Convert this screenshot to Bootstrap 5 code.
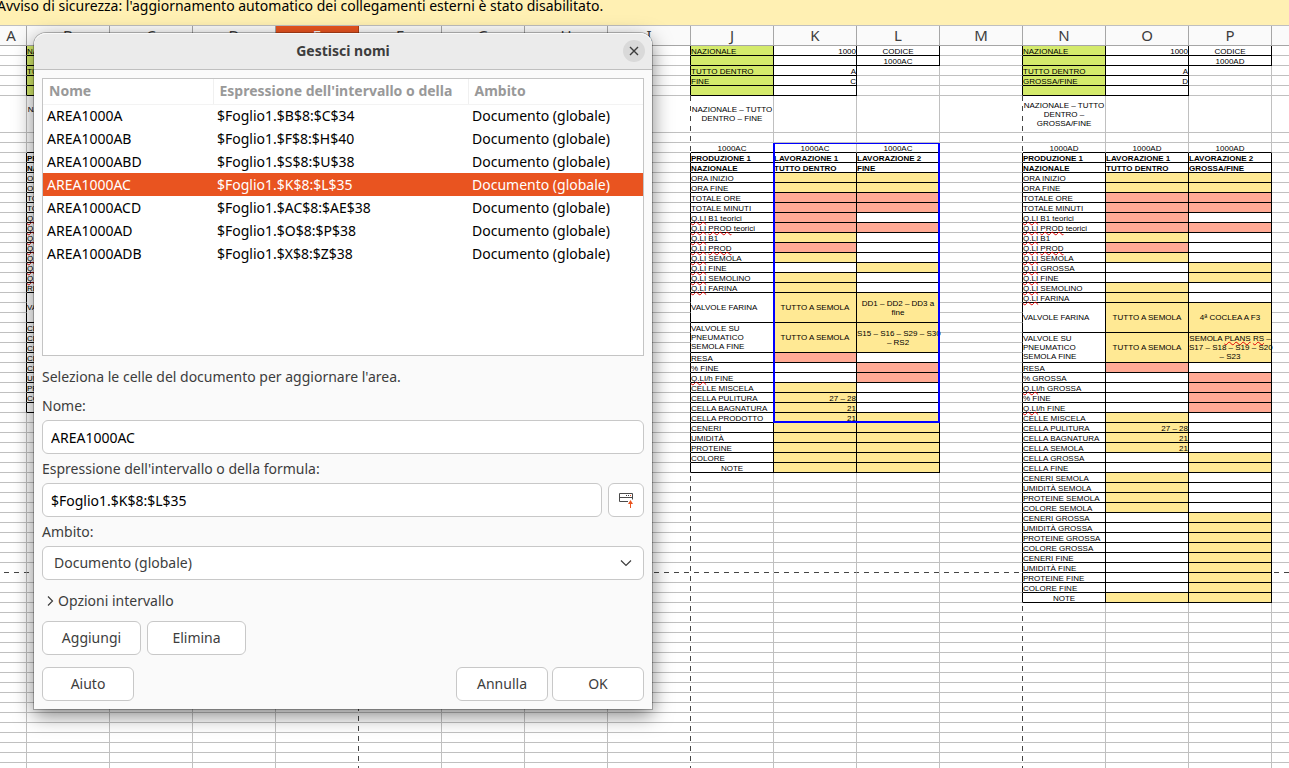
<!DOCTYPE html>
<html lang="it">
<head>
<meta charset="utf-8">
<meta name="viewport" content="width=device-width, initial-scale=1">
<title>Gestisci nomi</title>
<link href="https://cdn.jsdelivr.net/npm/bootstrap@5.3.0/dist/css/bootstrap.min.css" rel="stylesheet">
<style>
  body { font-family: "Noto Sans", "Open Sans", sans-serif; font-size: 14px; line-height: 20px; color: #3d3d3d; background: #fff; }

  .notice-bar { background: #fff0b3; border-bottom: 1px solid #bfbfbf; height: 26px; color: #000; line-height: 12px; font-size: 14px; }
  .notice-bar span { margin-left: -3px; white-space: nowrap; }

  /* Spreadsheet */
  .sheet { table-layout: fixed; border-collapse: separate; border-spacing: 0; width: 1355px; font: 8px/9px "Liberation Sans", sans-serif; color: #000; }
  .sheet col { width: 83px; }
  .sheet col.first-col { width: 27px; }
  .sheet col.page-end { background: linear-gradient(#444 50%, transparent 50%) right 0 / 1px 10px repeat-y; }
  .sheet th { height: 20px; padding: 0; background: #fafafa; border-right: 1px solid #a6a6a6; border-bottom: 1px solid #a6a6a6; font: 15px/19px "Noto Sans", sans-serif; color: #3d3d3d; text-align: center; }
  .sheet th:first-child { padding-right: 4px; }
  .sheet th.current { background: #e95420; border-right-color: #b23c12; color: #fff; }
  .sheet td { height: 10px; padding: 0; border-right: 1px solid #c0c0c0; border-bottom: 1px solid #c0c0c0; vertical-align: bottom; }
  .sheet tr.tall td { height: 37px; vertical-align: middle; }
  .sheet td.page-end { border-right-color: transparent; }
  .sheet tr.page-end { background: linear-gradient(90deg, #444 50%, transparent 50%) 4px bottom / 10px 1px repeat-x; }
  .sheet tr.page-end td { border-bottom-color: transparent; }
  .sheet tr td.line-r { border-right-color: #000; }
  .sheet tr td.line-b { border-bottom-color: #000; }
  .sheet td.one { white-space: nowrap; padding-top: 2px; line-height: 7px; }
  .sheet td.ctr { text-align: center; }
  .sheet td.end { text-align: right; }
  .sheet td.mid { vertical-align: middle; }
  .sheet td.green { background: #d4ea6b; }
  .sheet td.yellow { background: #ffe994; }
  .sheet td.red { background: #ffaa95; }
  .sheet td.strong { font-weight: bold; }
  .sheet .typo { text-decoration: underline wavy #e00000 1px; text-decoration-skip-ink: none; text-underline-offset: 0; }
  .sheet td.range-start { position: relative; }
  .range { position: absolute; left: -1px; top: 0; width: 167px; height: 280px; border: 2px solid #00f; border-top-width: 1px; pointer-events: none; }

  /* Dialog */
  .names-dialog { position: absolute; left: 34px; top: 33px; width: 618px; background: #fafafa; border-radius: 12px 12px 0 0; box-shadow: 0 0 0 1px rgba(0,0,0,.25), 0 6px 20px rgba(0,0,0,.5); }
  .dialog-title { height: 37px; background: #ebebeb; border-bottom: 1px solid #bfbfbf; border-radius: 12px 12px 0 0; box-shadow: inset 0 1px #f9f9f9; }
  .dialog-title h1 { font-size: 14px; line-height: 20px; font-weight: 700; color: #3d3d3d; }
  .close-btn { width: 22px; height: 22px; border: 0; border-radius: 50%; background: #d9d9d9; color: #3d3d3d; right: 7px; top: 7px; }
  .names-list { height: 278px; background: #fff; border: 1px solid #c4c4c4; }
  .names-list table { table-layout: fixed; color: #000; }
  .names-list th { height: 25px; padding: 0 0 0 6px; color: #999; border-right: 1px solid #f0f0f0; border-bottom: 1px solid #f3f3f3; overflow: hidden; white-space: nowrap; }
  .names-list th:last-child { border-right: 0; }
  .names-list td { height: 23px; padding: 0 0 0 4px; line-height: 22px; white-space: nowrap; }
  .names-list tr.chosen td { background: #e95420; color: #fff; }
  .c-name { width: 170px; } .c-expr { width: 255px; }
  .hint { margin-top: 11px; margin-bottom: 9px; }
  .field label { display: block; margin-bottom: 4px; }
  .field { margin-bottom: 5px; }
  .box { height: 34px; border: 1px solid #c8c8c8; border-radius: 6px; background: #fff; padding: 0 8px; font-size: 14px; line-height: 20px; color: #000; }
  select.box { color: #3d3d3d; padding: 0 32px 0 11px; appearance: none; background: #fff url("data:image/svg+xml,%3Csvg xmlns='http://www.w3.org/2000/svg' width='12' height='8'%3E%3Cpath d='M1 1.5l5 5 5-5' fill='none' stroke='%233d3d3d' stroke-width='1.2'/%3E%3C/svg%3E") no-repeat right 11px center; }
  .tight { gap: 6px; }
  .expander { margin-top: 11px; margin-bottom: 10px; border: 0; background: none; padding: 0 4px; color: #3d3d3d; }
  .push { height: 34px; width: 92px; border: 1px solid #c8c8c8; border-radius: 6px; background: #fff; color: #3d3d3d; padding: 0; }
  .push.wide { width: 99px; }
  .push.pick { width: 36px; }
</style>
</head>
<body>
<main class="vh-100 d-flex flex-column overflow-hidden position-relative">
  <div class="notice-bar flex-shrink-0"><span>Avviso di sicurezza: l'aggiornamento automatico dei collegamenti esterni è stato disabilitato.</span></div>

  <div class="flex-fill overflow-hidden">
    <table class="sheet" id="sheet"></table>
  </div>

  <section class="names-dialog" role="dialog" aria-labelledby="dlgTitle">
    <header class="dialog-title d-flex align-items-center justify-content-center position-relative">
      <h1 class="m-0" id="dlgTitle">Gestisci nomi</h1>
      <button type="button" class="close-btn position-absolute p-0 d-flex align-items-center justify-content-center" aria-label="Chiudi">
        <svg width="10" height="10" viewBox="0 0 10 10"><path d="M1 1l8 8M9 1l-8 8" stroke="currentColor" stroke-width="1.4"/></svg>
      </button>
    </header>

    <div class="p-2">
      <div class="names-list overflow-hidden">
        <table class="w-100">
          <colgroup><col class="c-name"><col class="c-expr"><col></colgroup>
          <thead><tr><th>Nome</th><th>Espressione dell'intervallo o della</th><th>Ambito</th></tr></thead>
          <tbody>
            <tr><td>AREA1000A</td><td>$Foglio1.$B$8:$C$34</td><td>Documento (globale)</td></tr>
            <tr><td>AREA1000AB</td><td>$Foglio1.$F$8:$H$40</td><td>Documento (globale)</td></tr>
            <tr><td>AREA1000ABD</td><td>$Foglio1.$S$8:$U$38</td><td>Documento (globale)</td></tr>
            <tr class="chosen"><td>AREA1000AC</td><td>$Foglio1.$K$8:$L$35</td><td>Documento (globale)</td></tr>
            <tr><td>AREA1000ACD</td><td>$Foglio1.$AC$8:$AE$38</td><td>Documento (globale)</td></tr>
            <tr><td>AREA1000AD</td><td>$Foglio1.$O$8:$P$38</td><td>Documento (globale)</td></tr>
            <tr><td>AREA1000ADB</td><td>$Foglio1.$X$8:$Z$38</td><td>Documento (globale)</td></tr>
          </tbody>
        </table>
      </div>

      <p class="hint">Seleziona le celle del documento per aggiornare l'area.</p>

      <div class="field">
        <label for="fName">Nome:</label>
        <input type="text" class="box d-block w-100" id="fName" value="AREA1000AC">
      </div>
      <div class="field">
        <label for="fExpr">Espressione dell'intervallo o della formula:</label>
        <div class="d-flex tight">
          <input type="text" class="box flex-fill" id="fExpr" value="$Foglio1.$K$8:$L$35">
          <button type="button" class="push pick d-flex align-items-center justify-content-center" aria-label="Riduci">
            <svg width="16" height="16" viewBox="0 0 16 16" fill="none"><path d="M10 9.5H1.500v-8h13v6M1.500 5.500h13" stroke="#4a4a4a"/><path d="M8 3h1v1H8zM10 3h1v1h-1z" fill="#3d3d3d"/><path d="M12 3h1v1h-1z" fill="#e95420"/><path d="M12.500 8l2.500 4h-2v4h-1v-4h-2z" fill="#e95420"/></svg>
          </button>
        </div>
      </div>
      <div class="field">
        <label for="fScope">Ambito:</label>
        <select class="box d-block w-100" id="fScope"><option>Documento (globale)</option></select>
      </div>

      <button type="button" class="expander d-flex align-items-center" aria-expanded="false">
        <svg class="me-1" width="8" height="12" viewBox="0 0 8 12"><path d="M2 1.500l4.500 4.500L2 10.500" fill="none" stroke="currentColor" stroke-width="1.200"/></svg>Opzioni intervallo
      </button>

      <div class="d-flex tight mb-2 pb-1">
        <button type="button" class="push wide">Aggiungi</button>
        <button type="button" class="push wide">Elimina</button>
      </div>
      <div class="d-flex gap-1">
        <button type="button" class="push me-auto">Aiuto</button>
        <button type="button" class="push">Annulla</button>
        <button type="button" class="push">OK</button>
      </div>
    </div>
  </section>
</main>

<script src="https://cdn.jsdelivr.net/npm/bootstrap@5.3.0/dist/js/bootstrap.bundle.min.js"></script>
<script>
  const HEADS = [...'ABCDEFGHIJKLMNOP', ''];
  const ROWS = 72;
  const PAGE_COLS = [4, 8, 12];   // last column of each printed page
  const PAGE_ROW = 50;            // last row of the printed page
  const cells = {};
  const FILL = { y: 'yellow', r: 'red', g: 'green', '': '' };

  const put = (row, col, text = '', cls = '', span = 1, boxed = true) => {
    cells[row + ',' + col] = { text, cls, span, boxed };
    for (let i = 1; i < span; i++) cells[(row + i) + ',' + col] = { covered: true, boxed: true };
  };

  // Heading block: labels on green, values at the right, product code.
  function heading(col, labels, values, title, code) {
    labels.forEach((t, i) => put(i + 1, col, t, 'one green'));
    values.forEach((t, i) => put(i + 1, col + 1, t, 'one end'));
    put(6, col, title, 'ctr', 1, false);
    if (code) {
      put(1, col + 2, 'CODICE', 'one ctr');
      put(2, col + 2, code, 'one ctr');
      [0, 1, 2].forEach(i => put(8, col + i, code, 'one ctr', 1, false));
    }
  }

  // Body block. Each entry: label, fill and text of the two work columns, row span.
  function body(col, entries) {
    let row = 9;
    entries.forEach(([label, a, b, ta = '', tb = '', span = 1]) => {
      const strong = row < 11 ? ' strong' : '';
      const wrap = span > 1 ? 'mid ' : 'one ';
      const side = span > 1 ? ' ctr' : (strong ? '' : ' end');
      put(row, col, label, wrap + (label === 'NOTE' ? 'ctr' : '') + strong, span);
      put(row, col + 1, ta, wrap + FILL[a] + side + strong, span);
      put(row, col + 2, tb, wrap + FILL[b] + side + strong, span);
      row += span;
    });
  }

  heading(1, ['NAZIONALE', '', 'TUTTO', '', ''], ['', '', '', '', ''], 'NAZIONALE – TUTTO A SEMOLA');
  body(1, [
    ['PRODUZIONE 1', '', ''], ['NAZIONALE', '', ''], ['ORA INIZIO', 'y', ''], ['ORA FINE', 'y', ''],
    ['TOTALE ORE', 'r', ''], ['TOTALE MINUTI', 'r', ''], ['Q.LI B1 teorici', 'r', ''], ['Q.LI PROD teorici', 'r', ''],
    ['Q.LI B1', 'y', ''], ['Q.LI PROD', 'r', ''], ['Q.LI SEMOLA', 'y', ''], ['Q.LI SEMOLINO', 'y', ''], ['Q.LI FARINA', 'y', ''],
    ['RESA', 'r', ''], ['VALVOLE FARINA', 'y', '', '', '', 3], ['CELLE MISCELA', 'y', ''], ['CELLA PULITURA', 'y', ''],
    ['CELLA BAGNATURA', 'y', ''], ['CELLA PRODOTTO', 'y', ''], ['CENERI', 'y', ''], ['UMIDITÀ', 'y', ''],
    ['PROTEINE', 'y', ''], ['COLORE', 'y', ''], ['NOTE', 'y', '']
  ]);

  heading(9, ['NAZIONALE', '', 'TUTTO DENTRO', 'FINE', ''], ['1000', '', 'A', 'C', ''], 'NAZIONALE – TUTTO DENTRO – FINE', '1000AC');
  body(9, [
    ['PRODUZIONE 1', '', '', 'LAVORAZIONE 1', 'LAVORAZIONE 2'], ['NAZIONALE', '', '', 'TUTTO DENTRO', 'FINE'],
    ['ORA INIZIO', 'y', 'y'], ['ORA FINE', 'y', 'y'], ['TOTALE ORE', 'r', 'r'], ['TOTALE MINUTI', 'r', 'r'],
    ['Q.LI B1 teorici', 'r', ''], ['Q.LI PROD teorici', 'r', 'r'], ['Q.LI B1', 'y', ''], ['Q.LI PROD', 'r', ''],
    ['Q.LI SEMOLA', 'y', ''], ['Q.LI FINE', '', 'y'], ['Q.LI SEMOLINO', 'y', ''], ['Q.LI FARINA', 'y', ''],
    ['VALVOLE FARINA', 'y', 'y', 'TUTTO A SEMOLA', 'DD1 – DD2 – DD3 a fine', 3],
    ['VALVOLE SU PNEUMATICO SEMOLA FINE', 'y', 'y', 'TUTTO A SEMOLA', '<span class="text-nowrap">S15 – S16 – S29 – S30</span> – RS2', 3],
    ['RESA', 'r', ''], ['% FINE', '', 'r'], ['Q.LI/h FINE', '', 'r'], ['CELLE MISCELA', 'y', ''],
    ['CELLA PULITURA', 'y', '', '27 – 28'], ['CELLA BAGNATURA', 'y', '', '21'], ['CELLA PRODOTTO', 'y', 'y', '21'],
    ['CENERI', 'y', 'y'], ['UMIDITÀ', 'y', 'y'], ['PROTEINE', 'y', 'y'], ['COLORE', 'y', 'y'], ['NOTE', 'y', 'y']
  ]);

  heading(13, ['NAZIONALE', '', 'TUTTO DENTRO', 'GROSSA/FINE', ''], ['1000', '', 'A', 'D', ''], 'NAZIONALE – TUTTO DENTRO – GROSSA/FINE', '1000AD');
  body(13, [
    ['PRODUZIONE 1', '', '', 'LAVORAZIONE 1', 'LAVORAZIONE 2'], ['NAZIONALE', '', '', 'TUTTO DENTRO', 'GROSSA/FINE'],
    ['ORA INIZIO', 'y', 'y'], ['ORA FINE', 'y', 'y'], ['TOTALE ORE', 'r', 'r'], ['TOTALE MINUTI', 'r', 'r'],
    ['Q.LI B1 teorici', 'r', ''], ['Q.LI PROD teorici', 'r', 'r'], ['Q.LI B1', 'y', ''], ['Q.LI PROD', 'r', ''],
    ['Q.LI SEMOLA', 'y', ''], ['Q.LI GROSSA', '', 'y'], ['Q.LI FINE', '', 'y'], ['Q.LI SEMOLINO', 'y', ''], ['Q.LI FARINA', 'y', ''],
    ['VALVOLE FARINA', 'y', 'y', 'TUTTO A SEMOLA', '4ª COCLEA A F3', 3],
    ['VALVOLE SU PNEUMATICO SEMOLA FINE', 'y', 'y', 'TUTTO A SEMOLA', 'SEMOLA PLANS RS – <span class="text-nowrap">S17 – S18 – S19 – S20</span> – S23', 3],
    ['RESA', 'r', ''], ['% GROSSA', '', 'r'], ['Q.LI/h GROSSA', '', 'r'], ['% FINE', '', 'r'], ['Q.LI/h FINE', '', 'r'],
    ['CELLE MISCELA', 'y', ''], ['CELLA PULITURA', 'y', '', '27 – 28'], ['CELLA BAGNATURA', 'y', '', '21'], ['CELLA SEMOLA', 'y', '', '21'],
    ['CELLA GROSSA', '', 'y'], ['CELLA FINE', '', 'y'], ['CENERI SEMOLA', 'y', ''], ['UMIDITÀ SEMOLA', 'y', ''],
    ['PROTEINE SEMOLA', 'y', ''], ['COLORE SEMOLA', 'y', ''], ['CENERI GROSSA', '', 'y'], ['UMIDITÀ GROSSA', '', 'y'],
    ['PROTEINE GROSSA', '', 'y'], ['COLORE GROSSA', '', 'y'], ['CENERI FINE', '', 'y'], ['UMIDITÀ FINE', '', 'y'],
    ['PROTEINE FINE', '', 'y'], ['COLORE FINE', '', 'y'], ['NOTE', 'y', 'y']
  ]);

  const at = (r, c) => cells[r + ',' + c] || {};
  const spell = t => t.replace(/Q\.LI|PROD(?= |$)|PLANS|RS(?= )/g, '<span class="typo">$&</span>');

  let html = '<colgroup>' + HEADS.map((l, c) =>
    `<col class="${c === 0 ? 'first-col' : ''}${PAGE_COLS.includes(c) ? 'page-end' : ''}">`).join('') + '</colgroup>';
  html += '<thead><tr>' + HEADS.map(l => `<th scope="col" class="${l === 'E' ? 'current' : ''}">${l}</th>`).join('') + '</tr></thead><tbody>';
  for (let r = 1; r <= ROWS; r++) {
    html += `<tr class="${r === 6 ? 'tall' : ''}${r === PAGE_ROW ? 'page-end' : ''}">`;
    for (let c = 0; c < HEADS.length; c++) {
      const k = at(r, c);
      if (k.covered) continue;
      const span = k.span || 1;
      const cls = [k.cls || ''];
      if (PAGE_COLS.includes(c)) cls.push('page-end');
      if (k.boxed || at(r, c + 1).boxed) cls.push('line-r');
      if (k.boxed || at(r + span, c).boxed) cls.push('line-b');
      const range = r === 8 && c === 10;
      if (range) cls.push('range-start');
      html += `<td class="${cls.join(' ').trim()}"${span > 1 ? ` rowspan="${span}"` : ''}>${spell(k.text || '')}${range ? '<div class="range"></div>' : ''}</td>`;
    }
    html += '</tr>';
  }
  document.getElementById('sheet').innerHTML = html + '</tbody>';
</script>
</body>
</html>
